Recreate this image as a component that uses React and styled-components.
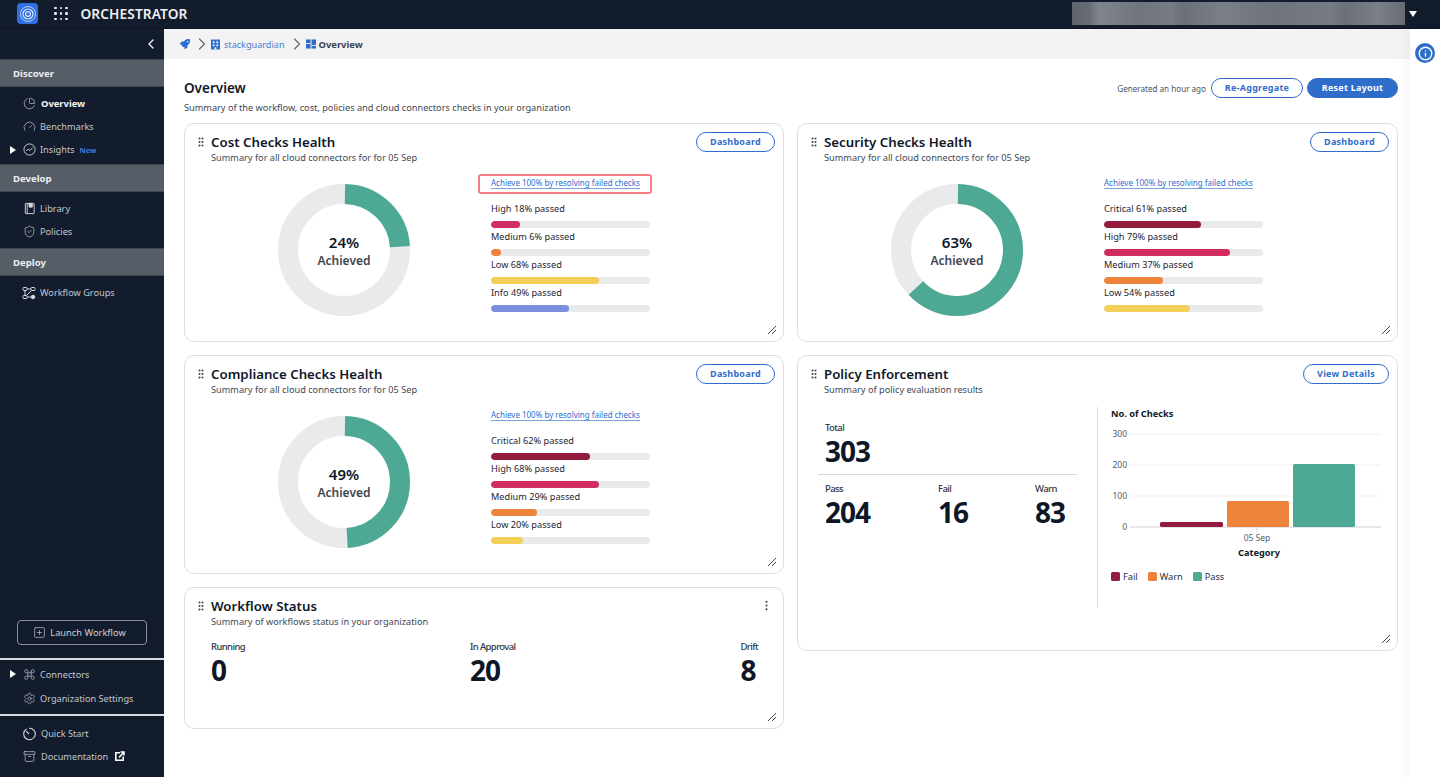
import React from "react";
import styled, { createGlobalStyle } from "styled-components";
import {
  ChartPie, Gauge, ShieldCheck, SquarePlus, Command, Settings, Archive,
  ChevronLeft, ChevronRight, GripVertical, EllipsisVertical, Info,
} from "lucide-react";
import { FaRocket } from "react-icons/fa";

const Global = createGlobalStyle`
  html, body { margin: 0; padding: 0; height: 100%; overflow: hidden; background: #fff; }
  * { box-sizing: border-box; }
  body { font-family: "Noto Sans", "Open Sans", sans-serif; color: #0f1726; }
`;

const NAVY = "#121c2c";
const BLUE = "#2f6dcb";
const GREEN = "#4ea994";
const CRIMSON = "#931b3e";
const PINK = "#d12c5f";
const ORANGE = "#ee833c";
const YELLOW = "#f3cf58";
const PERI = "#7b8fdf";

const Page = styled.div`
  width: 1440px; height: 777px; display: flex; flex-direction: column; overflow: hidden;
`;
const TopBar = styled.header`
  height: 29px; flex: none; background: ${NAVY}; display: flex; align-items: center;
  padding: 0 0 1px 17px; border-bottom: 1px solid #0b1320;
`;
const LogoBox = styled.div`
  width: 21px; height: 21px; border-radius: 4px; background: #2f6fdf;
  display: flex; align-items: center; justify-content: center; margin-right: 16px;
`;
const AppsGrid = styled.div`
  display: grid; grid-template-columns: repeat(3, 2.5px); gap: 3px; margin-right: 13px;
  span { width: 2.5px; height: 2.5px; border-radius: 50%; background: #e8eaee; }
`;
const Brand = styled.div`
  font-size: 13.7px; font-weight: 600; color: #eef0f3; letter-spacing: 0.1px;
`;
const Redacted = styled.div`
  margin-left: auto; width: 333px; height: 23px;
  background: linear-gradient(90deg, #5f646d 0%, #666b74 5%, #80858d 8%, #70757d 20%, #777c84 30%, #6b7078 33%, #7a7f87 45%, #6f747c 60%, #777c84 78%, #6b7078 82%, #7b8088 92%, #666b74 100%);
`;
const Caret = styled.div`
  width: 0; height: 0; margin: 0 23px 0 4px;
  border-left: 4px solid transparent; border-right: 4px solid transparent; border-top: 6px solid #fff;
`;
const Body = styled.div`
  flex: 1; display: flex; min-height: 0;
`;
const Side = styled.aside`
  width: 164px; flex: none; background: ${NAVY}; display: flex; flex-direction: column;
`;
const Collapse = styled.div`
  height: 30px; flex: none; display: flex; align-items: center; justify-content: flex-end;
  padding-right: 5px; color: #f0f2f4;
`;
const SectionHead = styled.div`
  height: 28px; flex: none; background: #565d66; display: flex; align-items: center;
  padding-left: 13px; color: #eceef0; font-size: 9.6px; font-weight: 700;
  border-top: 1px solid #3e4550; border-bottom: 1px solid #3e4550;
`;
const Group = styled.div`
  padding: ${p => p.$pad};
`;
const Item = styled.div`
  height: ${p => p.$h || 23}px; display: flex; align-items: center; padding-left: 10px;
  font-size: ${p => (p.$active ? 9.4 : 9.2)}px; color: ${p => (p.$active ? "#f4f5f7" : "#c3c7cd")};
  font-weight: ${p => (p.$active ? 700 : 400)};
`;
const CaretSlot = styled.span`
  width: 12px; flex: none; display: flex; align-items: center;
  &::before {
    content: ""; display: ${p => (p.$on ? "block" : "none")}; width: 0; height: 0;
    border-top: 4px solid transparent; border-bottom: 4px solid transparent; border-left: 6px solid #fff;
  }
`;
const IconSlot = styled.span`
  width: 14px; height: 14px; flex: none; margin-right: ${p => (p.$wide ? 5 : 4)}px; display: flex; align-items: center; justify-content: center;
  color: #d4d7dc;
`;
const NewTag = styled.span`
  color: #3b7ddd; font-size: 7.5px; font-weight: 700; margin-left: 5px;
`;
const Spacer = styled.div` flex: 1; `;
const Launch = styled.button`
  margin: 0 17px 13px; height: 25px; background: transparent; border: 1px solid #8a909a; border-radius: 4px;
  color: #cdd0d5; font: 400 9.3px "Noto Sans", sans-serif; display: flex; align-items: center; justify-content: center; gap: 4px;
  padding: 0 5px 0 0;
`;
const SideRule = styled.div` height: 2px; background: #d8dbdf; flex: none; `;
const Center = styled.div`
  flex: 1; min-width: 0; display: flex; flex-direction: column; background: #fff;
`;
const Crumbs = styled.nav`
  height: 30px; flex: none; background: #f3f3f3; display: flex; align-items: center; padding-left: 16px;
  font-size: 9.1px; color: #4b7fd0;
`;
const CrumbSep = styled.span` color: #5e646d; display: flex; margin: 0 -1px 0 2px; `;
const CrumbNow = styled.span` color: #3c4350; font-weight: 700; font-size: 9.4px; margin-left: 3px; `;
const CrumbName = styled.span` margin-left: 4px; `;
const Main = styled.main`
  flex: 1; padding: 19px 12px 0 20px; min-height: 0;
`;
const PageHead = styled.div`
  display: flex; justify-content: space-between; margin-bottom: 8px;
`;
const PageTitle = styled.h1`
  margin: 0; font-size: 13.5px; line-height: 20px; font-weight: 600; color: #0f1726;
`;
const PageSub = styled.p`
  margin: 3px 0 0; font-size: 9.2px; line-height: 14px; color: #414855;
`;
const Actions = styled.div`
  display: flex; align-items: center; height: 20px; font-size: 8.1px; color: #4b525e; gap: 4px;
`;
const Pill = styled.button`
  height: 20px; width: ${p => p.$w}px; border-radius: 10px; border: 1px solid ${BLUE};
  background: ${p => (p.$solid ? BLUE : "#fff")}; color: ${p => (p.$solid ? "#fff" : BLUE)};
  font: 700 9px "Noto Sans", sans-serif; letter-spacing: 0.25px; padding: 0 0 1px; flex: none;
  margin: ${p => p.$m || 0};
`;
const Grid = styled.div`
  display: grid; grid-template-columns: 600px 601px; column-gap: 13px; align-items: start;
`;
const Column = styled.div` display: flex; flex-direction: column; gap: 13px; min-width: 0; `;
const Card = styled.section`
  position: relative; height: ${p => p.$h}px; background: #fff; border: 1px solid #dcdee3; border-radius: 10px;
  padding: 7px 8px 0 11px;
`;
const CardHead = styled.div` display: flex; align-items: flex-start; `;
const Grip = styled.span`
  width: 16px; height: 22px; flex: none; display: flex; align-items: center; color: #3d4450; margin-left: -1px;
`;
const HeadText = styled.div` flex: 1; min-width: 0; `;
const CardTitle = styled.h2`
  margin: 0; font-size: 13.25px; line-height: 22px; font-weight: 600; color: #0f1726;
`;
const CardSub = styled.p`
  margin: -2px 0 0; font-size: 9.2px; line-height: 14px; color: #414855;
`;
const Dots = styled.span`
  display: flex; color: #3d4450; margin: 4px 2px 0 0;
`;
const HealthBody = styled.div`
  display: flex; align-items: flex-start; margin: 11px 0 0 82px;
`;
const DonutBox = styled.div`
  position: relative; width: 132px; height: 132px; margin: 8px 81px 0 0; flex: none;
`;
const DonutText = styled.div`
  position: absolute; inset: 0; display: flex; flex-direction: column; align-items: center; justify-content: center; gap: 2px; padding-top: 1px;
`;
const DonutPct = styled.div` font-size: 15px; line-height: 18px; font-weight: 600; color: #0f1726; `;
const DonutLbl = styled.div` font-size: 12px; line-height: 16px; font-weight: 600; color: #3d4450; `;
const Checks = styled.div` width: 159px; position: relative; `;
const Advice = styled.a`
  display: block; width: fit-content; font-size: 8px; line-height: 11px; color: ${BLUE}; margin-top: 1px; height: 12px;
  border-bottom: 1px solid #7ba2e0; white-space: nowrap;
`;
const RedBox = styled.span`
  position: absolute; left: -13px; top: -2px; width: 174px; height: 20px; border: 2px solid #f77e82; border-radius: 3px;
`;
const Row = styled.div` height: 28px; `;
const RowLabel = styled.div` font-size: 9.2px; line-height: 16px; color: #1e2532; margin-bottom: 4px; white-space: nowrap; `;
const Track = styled.div` height: 7px; border-radius: 4px; background: #e9eaeb; overflow: hidden; `;
const Fill = styled.div` height: 100%; border-radius: 4px; background: ${p => p.$c}; `;
const Rows = styled.div` margin-top: 12px; `;
const Resize = styled.span`
  position: absolute; right: 6px; bottom: 6px; width: 10px; height: 10px; display: flex;
`;
const Stats = styled.div`
  display: flex; justify-content: space-between; margin: 11px 17px 0 15px;
`;
const StatLabel = styled.div`
  font-size: 9.5px; line-height: 13px; font-weight: 500; letter-spacing: -0.6px; color: #2e3542;
`;
const StatValue = styled.div`
  font-size: 28px; line-height: 34px; font-weight: 700; letter-spacing: -1px; color: #0f1726;
`;
const PolicyBody = styled.div`
  display: flex; margin-top: 10px; height: 201px;
`;
const PolicyLeft = styled.div`
  width: 259px; margin: 14px 20px 0 9px; flex: none;
`;
const TotalBox = styled.div` padding-left: 7px; height: 53px; `;
const PolicyRule = styled.div` height: 1px; background: #d6d8dc; `;
const PolicyStats = styled.div`
  display: grid; grid-template-columns: 113px 97px auto; padding: 6.5px 0 0 7px;
`;
const PolicyRight = styled.div`
  flex: 1; border-left: 1px solid #d9dbde; padding: 0 0 0 13px; min-width: 0;
`;
const ChartTitle = styled.div` font-size: 9.2px; line-height: 13px; font-weight: 700; color: #0f1726; margin-bottom: 1px; `;
const ChartSvg = styled.svg` display: block; margin-left: -13px; `;
const Legend = styled.div`
  display: flex; gap: 10px; margin-top: 11px; font-size: 9.2px; line-height: 13px; color: #2c3340;
`;
const LegendItem = styled.span`
  display: flex; align-items: center; gap: 3px;
  &::before { content: ""; width: 9px; height: 9px; border-radius: 1.5px; background: ${p => p.$c}; }
`;
const Rail = styled.aside`
  width: 30px; flex: none; background: #fff; box-shadow: -5px 0 9px rgba(0,0,0,.035); display: flex; justify-content: center; padding-top: 14px;
`;
const InfoBtn = styled.div`
  width: 20px; height: 20px; border-radius: 50%; background: ${BLUE}; color: #fff; display: flex; align-items: center; justify-content: center;
`;

const Logo = () => (
  <LogoBox>
    <svg width="18" height="18" viewBox="0 0 18 18" fill="none" stroke="#dbe6ff">
      <circle cx="9" cy="9" r="7.5" strokeWidth="1" opacity=".8" />
      <circle cx="9" cy="9" r="5" strokeWidth="1.2" />
      <circle cx="9" cy="9" r="2.4" strokeWidth="1.2" />
    </svg>
  </LogoBox>
);
const InsightsIcon = () => (
  <svg width="13" height="13" viewBox="0 0 14 14" fill="none" stroke="currentColor" strokeWidth="1">
    <circle cx="7" cy="7" r="6" /><path d="M3.5 8.5 5.5 6.5 7.2 8 10.5 5.2" />
  </svg>
);
const LibraryIcon = () => (
  <svg width="13" height="13" viewBox="0 0 14 14" fill="none" stroke="currentColor" strokeWidth="1">
    <rect x="2.5" y="1.5" width="9.5" height="11" rx=".5" /><path d="M4.5 1.5v11" /><path d="M6.5 1.5h3.5v4H6.5z" fill="currentColor" />
  </svg>
);
const GroupsIcon = () => (
  <svg width="14" height="14" viewBox="0 0 14 14" fill="none" stroke="currentColor" strokeWidth="1">
    <rect x="1" y="1.5" width="4" height="3" rx=".8" /><rect x="9" y="1.5" width="4" height="3" rx=".8" />
    <rect x="1" y="9.5" width="4" height="3" rx=".8" /><circle cx="11" cy="11" r="1.8" fill="currentColor" />
    <path d="M5 3h4M3 4.5v5M5 11h4M9.5 4.5 4.5 9.5" />
  </svg>
);
const TimerIcon = () => (
  <svg width="14" height="14" viewBox="0 0 14 14" fill="none" stroke="currentColor" strokeWidth="1.1">
    <path d="M4.5 2A5.8 5.8 0 1 0 7 1.2" /><path d="M7 7 4.2 4.2" />
  </svg>
);
const ExtIcon = () => (
  <svg width="11" height="11" viewBox="0 0 11 11" style={{ marginLeft: 6 }}>
    <path d="M1 1h5v1.6H2.6v5.8h5.8V5.500H10V10H1z" fill="#fff" />
    <path d="M5 6.500 9.500 1.500M6.500 1h3.500v3.500" stroke="#fff" strokeWidth="1.500" fill="none" />
  </svg>
);
const BuildingIcon = () => (
  <svg width="9" height="11" viewBox="0 0 10 11">
    <rect width="10" height="11" fill={BLUE} />
    <path d="M2 2h2v2H2zM6 2h2v2H6zM2 5.500h2v2H2zM6 5.500h2v2H6zM4 8.500h2V11H4z" fill="#f3f3f3" />
  </svg>
);
const DashIcon = () => (
  <svg width="10" height="10" viewBox="0 0 11 10" fill={BLUE}>
    <rect x="0" y="0" width="5" height="4" /><rect x="6" y="0" width="5" height="6" />
    <rect x="0" y="5" width="5" height="5" /><rect x="6" y="7" width="5" height="3" />
  </svg>
);
const ResizeMark = () => (
  <Resize>
    <svg width="10" height="10" viewBox="0 0 10 10" stroke="#3d4450" strokeWidth="1">
      <path d="M1 9 9 1M5 9 9 5" />
    </svg>
  </Resize>
);

const NavItem = ({ icon, label, active, caret, tag, after, h, wide }) => (
  <Item $active={active} $h={h}>
    <CaretSlot $on={caret} />
    <IconSlot $wide={wide}>{icon}</IconSlot>
    {label}
    {tag && <NewTag>{tag}</NewTag>}
    {after}
  </Item>
);

const Donut = ({ pct }) => {
  const r = 56;
  const c = 2 * Math.PI * r;
  const gap = 1;
  return (
    <DonutBox>
      <svg width="132" height="132" viewBox="0 0 132 132">
        <circle cx="66" cy="66" r={r} fill="none" stroke="#e9eaeb" strokeWidth="20" />
        <circle
          cx="66" cy="66" r={r} fill="none" stroke={GREEN} strokeWidth="20"
          strokeDasharray={`${(c * pct) / 100 - gap} ${c}`}
          strokeDashoffset={-gap}
          transform="rotate(-90 66 66)"
        />
      </svg>
      <DonutText>
        <DonutPct>{pct}%</DonutPct>
        <DonutLbl>Achieved</DonutLbl>
      </DonutText>
    </DonutBox>
  );
};

const Header = ({ title, sub, action }) => (
  <CardHead>
    <Grip><GripVertical size={12} strokeWidth={2.2} /></Grip>
    <HeadText>
      <CardTitle>{title}</CardTitle>
      <CardSub>{sub}</CardSub>
    </HeadText>
    {action}
  </CardHead>
);

const SUB = "Summary for all cloud connectors for for 05 Sep";

const HealthCard = ({ title, pct, rows, flagged }) => (
  <Card $h={219}>
    <Header title={title} sub={SUB} action={<Pill $w={79} $m="1px 0 0">Dashboard</Pill>} />
    <HealthBody>
      <Donut pct={pct} />
      <Checks>
        {flagged && <RedBox />}
        <Advice>Achieve 100% by resolving failed checks</Advice>
        <Rows>
          {rows.map(([name, v, c]) => (
            <Row key={name}>
              <RowLabel>{name} {v}% passed</RowLabel>
              <Track><Fill $c={c} style={{ width: `${v}%` }} /></Track>
            </Row>
          ))}
        </Rows>
      </Checks>
    </HealthBody>
    <ResizeMark />
  </Card>
);

const Chart = () => {
  const x0 = 1108;
  const yTop = 421;
  const ticks = [[300, 434], [200, 465], [100, 496], [0, 527]];
  const bars = [[1160, 522, 63, 5, CRIMSON], [1227, 501, 62, 26, ORANGE], [1293, 464, 62, 63, GREEN]];
  return (
    <ChartSvg width="285" height="138" viewBox={`${x0 - 10} ${yTop} 285 138`}>
      {ticks.map(([v, y]) => (
        <g key={v}>
          <line x1="1130" x2="1381" y1={y} y2={y} stroke={v === 0 ? "#c9ced6" : "#eff0f2"} strokeWidth="1" />
          <text x="1127" y={y + 3} textAnchor="end" fontSize="8.500" fill="#555c68" fontFamily="Noto Sans">{v}</text>
        </g>
      ))}
      {bars.map(([x, y, w, h, c]) => <rect key={x} x={x} y={y} width={w} height={h} rx="1.500" fill={c} />)}
      <line x1="1257" x2="1257" y1="527" y2="532" stroke="#c9ced6" />
      <text x="1257" y="541" textAnchor="middle" fontSize="8.500" fill="#555c68" fontFamily="Noto Sans">05 Sep</text>
      <text x="1259" y="556" textAnchor="middle" fontSize="9.200" fontWeight="700" fill="#0f1726" fontFamily="Noto Sans">Category</text>
    </ChartSvg>
  );
};

export default function App() {
  return (
    <Page>
      <Global />
      <TopBar>
        <Logo />
        <AppsGrid>{Array.from({ length: 9 }, (_, i) => <span key={i} />)}</AppsGrid>
        <Brand>ORCHESTRATOR</Brand>
        <Redacted />
        <Caret />
      </TopBar>
      <Body>
        <Side>
          <Collapse><ChevronLeft size={16} strokeWidth={2} /></Collapse>
          <SectionHead>Discover</SectionHead>
          <Group $pad="5px 0 3px">
            <NavItem active wide icon={<ChartPie size={13} strokeWidth={1.2} />} label="Overview" />
            <NavItem icon={<Gauge size={13} strokeWidth={1.2} />} label="Benchmarks" />
            <NavItem caret icon={<InsightsIcon />} label="Insights" tag="New" />
          </Group>
          <SectionHead>Develop</SectionHead>
          <Group $pad="5px 0 5px">
            <NavItem icon={<LibraryIcon />} label="Library" />
            <NavItem icon={<ShieldCheck size={13} strokeWidth={1.2} />} label="Policies" />
          </Group>
          <SectionHead>Deploy</SectionHead>
          <Group $pad="5px 0 0">
            <NavItem icon={<GroupsIcon />} label="Workflow Groups" />
          </Group>
          <Spacer />
          <Launch><SquarePlus size={13} strokeWidth={1.2} />Launch Workflow</Launch>
          <SideRule />
          <Group $pad="2px 0 4px">
            <NavItem caret icon={<Command size={13} strokeWidth={1.1} />} label="Connectors" h={24} />
            <NavItem icon={<Settings size={13} strokeWidth={1.1} />} label="Organization Settings" h={24} />
          </Group>
          <SideRule />
          <Group $pad="6px 0 9px">
            <NavItem wide icon={<TimerIcon />} label="Quick Start" />
            <NavItem wide icon={<Archive size={13} strokeWidth={1.2} />} label="Documentation" after={<ExtIcon />} />
          </Group>
        </Side>
        <Center>
          <Crumbs>
            <FaRocket size={10} color={BLUE} />
            <CrumbSep><ChevronRight size={20} strokeWidth={1.3} /></CrumbSep>
            <BuildingIcon />
            <CrumbName>stackguardian</CrumbName>
            <CrumbSep><ChevronRight size={20} strokeWidth={1.3} /></CrumbSep>
            <DashIcon />
            <CrumbNow>Overview</CrumbNow>
          </Crumbs>
          <Main>
            <PageHead>
              <div>
                <PageTitle>Overview</PageTitle>
                <PageSub>Summary of the workflow, cost, policies and cloud connectors checks in your organization</PageSub>
              </div>
              <Actions>
                Generated an hour ago
                <Pill $w={92} $m="0 0 0 1px">Re-Aggregate</Pill>
                <Pill $w={91} $solid>Reset Layout</Pill>
              </Actions>
            </PageHead>
            <Grid>
              <Column>
                <HealthCard flagged title="Cost Checks Health" pct={24} rows={[["High", 18, PINK], ["Medium", 6, ORANGE], ["Low", 68, YELLOW], ["Info", 49, PERI]]} />
                <HealthCard title="Compliance Checks Health" pct={49} rows={[["Critical", 62, CRIMSON], ["High", 68, PINK], ["Medium", 29, ORANGE], ["Low", 20, YELLOW]]} />
                <Card $h={142}>
                  <Header title="Workflow Status" sub="Summary of workflows status in your organization"
                    action={<Dots><EllipsisVertical size={13} strokeWidth={2} /></Dots>} />
                  <Stats>
                    {[["Running", 0], ["In Approval", 20], ["Drift", 8]].map(([l, v]) => (
                      <div key={l}>
                        <StatLabel>{l}</StatLabel>
                        <StatValue>{v}</StatValue>
                      </div>
                    ))}
                  </Stats>
                  <ResizeMark />
                </Card>
              </Column>
              <Column>
                <HealthCard title="Security Checks Health" pct={63} rows={[["Critical", 61, CRIMSON], ["High", 79, PINK], ["Medium", 37, ORANGE], ["Low", 54, YELLOW]]} />
                <Card $h={296}>
                  <Header title="Policy Enforcement" sub="Summary of policy evaluation results" action={<Pill $w={86} $m="1px 0 0">View Details</Pill>} />
                  <PolicyBody>
                    <PolicyLeft>
                      <TotalBox>
                        <StatLabel>Total</StatLabel>
                        <StatValue>303</StatValue>
                      </TotalBox>
                      <PolicyRule />
                      <PolicyStats>
                        {[["Pass", 204], ["Fail", 16], ["Warn", 83]].map(([l, v]) => (
                          <div key={l}>
                            <StatLabel>{l}</StatLabel>
                            <StatValue>{v}</StatValue>
                          </div>
                        ))}
                      </PolicyStats>
                    </PolicyLeft>
                    <PolicyRight>
                      <ChartTitle>No. of Checks</ChartTitle>
                      <Chart />
                      <Legend>
                        <LegendItem $c={CRIMSON}>Fail</LegendItem>
                        <LegendItem $c={ORANGE}>Warn</LegendItem>
                        <LegendItem $c={GREEN}>Pass</LegendItem>
                      </Legend>
                    </PolicyRight>
                  </PolicyBody>
                  <ResizeMark />
                </Card>
              </Column>
            </Grid>
          </Main>
        </Center>
        <Rail>
          <InfoBtn><Info size={15} strokeWidth={2.2} /></InfoBtn>
        </Rail>
      </Body>
    </Page>
  );
}
